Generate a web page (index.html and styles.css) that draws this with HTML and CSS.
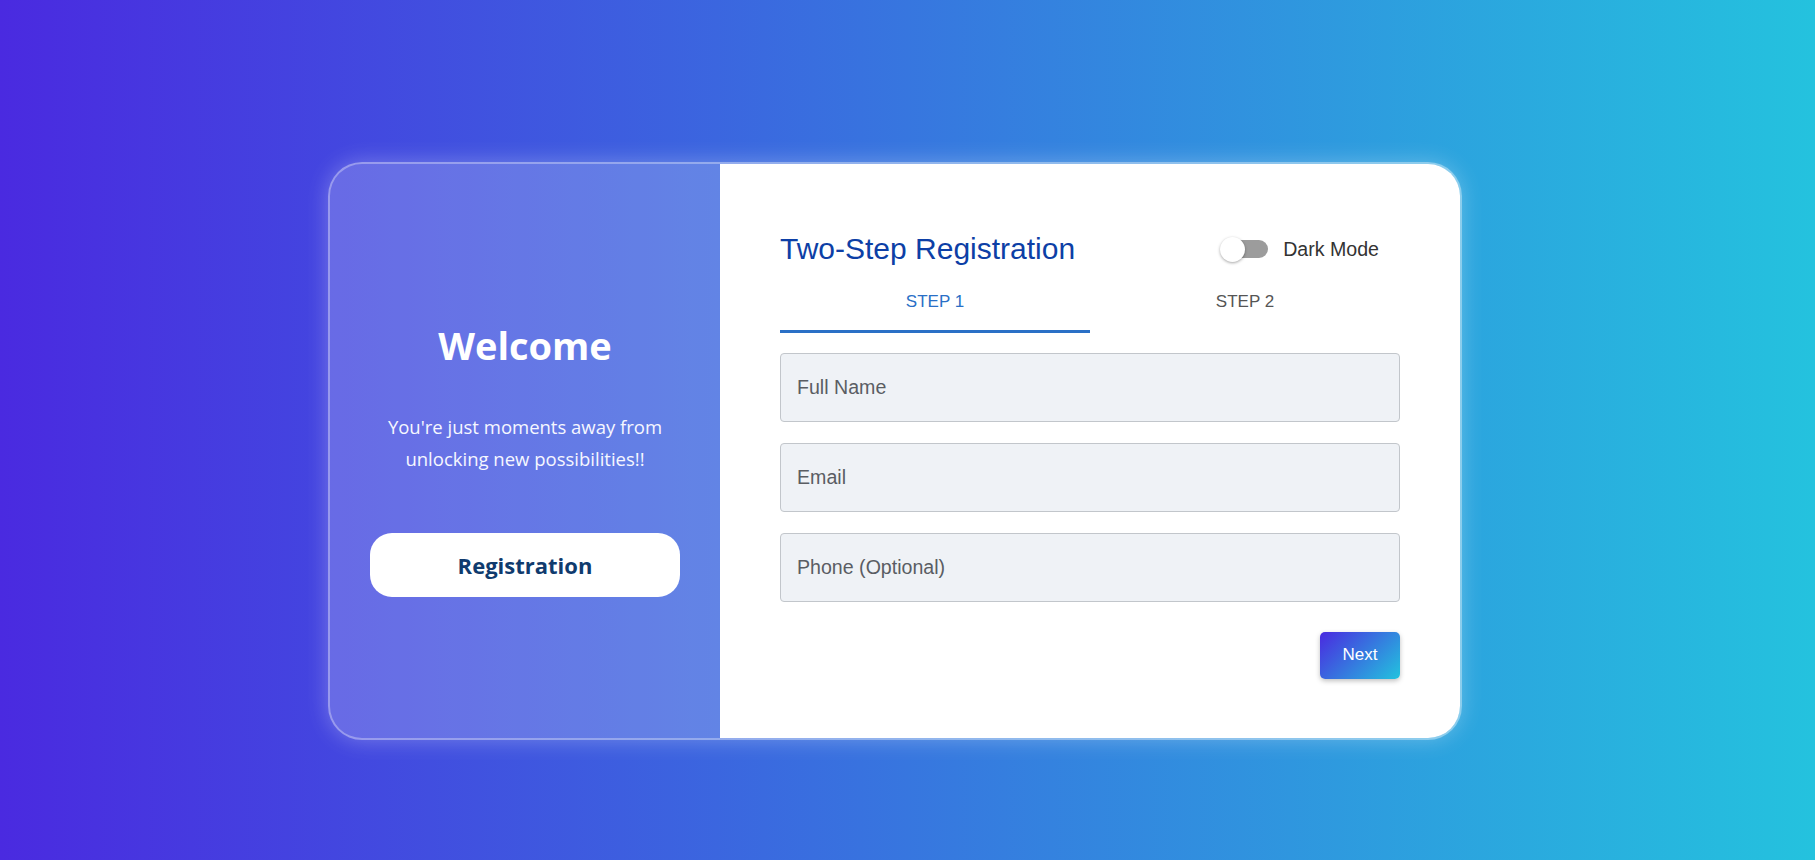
FILE: index.html
```html
<!DOCTYPE html>
<html lang="en">
<head>
<meta charset="UTF-8">
<title>Two-Step Registration</title>
<link rel="stylesheet" href="styles.css">
</head>
<body>
<div class="page">
  <div class="card">
    <section class="welcome">
      <h1 class="welcome-title">Welcome</h1>
      <p class="welcome-text">You're just moments away from<br>unlocking new possibilities!!</p>
      <button class="welcome-btn" type="button">Registration</button>
    </section>
    <section class="form-panel">
      <header class="form-header">
        <h2 class="form-title">Two-Step Registration</h2>
        <div class="toggle">
          <span class="switch"><span class="track"></span><span class="knob"></span></span>
          <span class="toggle-label">Dark Mode</span>
        </div>
      </header>
      <nav class="tabs">
        <div class="tab active">STEP 1</div>
        <div class="tab">STEP 2</div>
      </nav>
      <form class="fields">
        <input class="field" type="text" placeholder="Full Name">
        <input class="field" type="email" placeholder="Email">
        <input class="field" type="tel" placeholder="Phone (Optional)">
        <div class="actions">
          <button class="next-btn" type="button">Next</button>
        </div>
      </form>
    </section>
  </div>
</div>
</body>
</html>
```
FILE: styles.css
```css
html, body {
  margin: 0;
  padding: 0;
}
body {
  min-height: 100vh;
  background: linear-gradient(90deg, #4a2ae0 0%, #24c2de 100%);
  font-family: "Liberation Sans", Arial, sans-serif;
  overflow: hidden;
}
.page {
  padding: 162px 0 0 328px;
}
.card {
  box-sizing: border-box;
  width: 1134px;
  display: flex;
  border: 2px solid rgba(255, 255, 255, 0.32);
  border-radius: 34px;
  background: rgba(255, 255, 255, 0.2);
  box-shadow: 0 0 22px rgba(255, 255, 255, 0.28);
  overflow: hidden;
}
.welcome {
  box-sizing: border-box;
  width: 390px;
  flex: none;
  display: flex;
  flex-direction: column;
  align-items: stretch;
  justify-content: center;
  padding: 14px 40px 0;
  text-align: center;
  color: #fff;
  font-family: "Open Sans", "Noto Sans", sans-serif;
}
.welcome-title {
  margin: 0 0 40px;
  font-size: 38px;
  font-weight: 700;
  line-height: normal;
}
.welcome-text {
  margin: 0 0 58px;
  font-size: 18.5px;
  line-height: 32.4px;
  color: #f6f7ff;
}
.welcome-btn {
  height: 64px;
  border: none;
  border-radius: 22px;
  background: #fff;
  color: #0f3b6e;
  font-family: "Open Sans", "Noto Sans", sans-serif;
  font-size: 22px;
  font-weight: 700;
  cursor: pointer;
}
.form-panel {
  box-sizing: border-box;
  width: 740px;
  flex: none;
  background: #fff;
  padding: 68px 60px 59px;
}
.form-header {
  display: flex;
  align-items: center;
  justify-content: space-between;
}
.form-title {
  margin: 0;
  font-size: 30px;
  font-weight: 400;
  line-height: normal;
  color: #0d3fa6;
}
.toggle {
  display: flex;
  align-items: center;
  gap: 15px;
  margin-right: 21px;
}
.switch {
  position: relative;
  width: 48px;
  height: 25px;
}
.track {
  position: absolute;
  left: 8px;
  right: 0;
  top: 3.5px;
  height: 18px;
  border-radius: 9px;
  background: #9c9c9c;
}
.knob {
  position: absolute;
  left: 0;
  top: 0;
  width: 25px;
  height: 25px;
  border-radius: 50%;
  background: #fff;
  box-shadow: 0 1px 3px rgba(0, 0, 0, 0.35);
}
.toggle-label {
  font-size: 19.6px;
  color: #333;
}
.tabs {
  display: grid;
  grid-template-columns: 1fr 1fr;
  margin-top: 12px;
}
.tab {
  padding: 14px 0 17.5px;
  border-bottom: 3px solid transparent;
  text-align: center;
  font-size: 17px;
  line-height: normal;
  color: #555;
}
.tab.active {
  color: #2a6fc6;
  border-bottom-color: #2a70c6;
}
.fields {
  display: flex;
  flex-direction: column;
  gap: 21px;
  margin: 20.4px 0 0;
}
.field {
  box-sizing: border-box;
  width: 100%;
  height: 69px;
  padding: 0 16px;
  border: 1px solid #c2c6cb;
  border-radius: 4px;
  background: #eff2f6;
  font-family: "Liberation Sans", Arial, sans-serif;
  font-size: 19.6px;
  color: #333;
  outline: none;
}
.field::placeholder {
  color: #5a5d63;
  opacity: 1;
}
.actions {
  display: flex;
  justify-content: flex-end;
  margin-top: 9px;
}
.next-btn {
  border: none;
  border-radius: 5px;
  padding: 13.5px 22.5px;
  background: linear-gradient(135deg, #4a2ae0 0%, #22c3de 100%);
  color: #fff;
  font-family: "Liberation Sans", Arial, sans-serif;
  font-size: 17px;
  line-height: normal;
  box-shadow: 0 2px 5px rgba(0, 0, 0, 0.25);
  cursor: pointer;
}
```
